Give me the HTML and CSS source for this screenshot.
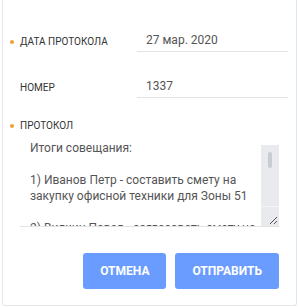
FILE: index.html
```html
<!DOCTYPE html>
<html lang="ru">
<head>
<meta charset="utf-8">
<link rel="stylesheet" href="styles.css">
</head>
<body>
<div class="card">
  <div class="rows">
    <div class="label req">Дата протокола</div>
    <div class="field">27 мар. 2020</div>
    <div class="label">Номер</div>
    <div class="field">1337</div>
  </div>
  <div class="label req proto-label">Протокол</div>
  <div class="textarea">
    <div class="ta-text">Итоги совещания:<br><br>1) Иванов Петр - составить смету на<br>закупку офисной техники для Зоны 51<br><br>2) Вилкин Павел - согласовать смету на<br>с отделом закупок</div>
    <div class="scrollbar">
      <div class="track"><div class="thumb"></div></div>
      <div class="corner">
        <svg width="9" height="9" viewBox="0 0 9 9"><path d="M1 8 L8 1 M5 8 L8 5" stroke="#555" stroke-width="1" fill="none"/></svg>
      </div>
    </div>
  </div>
  <div class="actions">
    <button class="btn">Отмена</button>
    <button class="btn">Отправить</button>
  </div>
</div>
</body>
</html>
```
FILE: styles.css
```css
html, body {
  margin: 0;
  padding: 0;
  background: #fff;
}
body {
  font-family: Roboto, "Liberation Sans", sans-serif;
}
.card {
  box-sizing: border-box;
  margin-left: 2px;
  width: 295px;
  height: 306px;
  border: 1px solid #e4e6ea;
  border-top: none;
  border-radius: 0 0 3px 3px;
  padding: 29px 8px 0 17px;
}
.rows {
  display: grid;
  grid-template-columns: 117px 1fr;
  row-gap: 23px;
  align-items: center;
}
.label {
  position: relative;
  font-size: 10px;
  line-height: 16px;
  text-transform: uppercase;
  color: #333;
}
.rows .label {
  padding-top: 2px;
}
.label.req::before {
  content: "";
  position: absolute;
  left: -10px;
  top: 50%;
  margin-top: -2px;
  width: 4px;
  height: 4px;
  border-radius: 50%;
  background: #f3a132;
}
.rows .label.req::before {
  margin-top: -1px;
}
.field {
  font-size: 12px;
  line-height: 16px;
  color: #555;
  padding: 3px 0 3px 9px;
  border-bottom: 1px solid #e3e3e3;
}
.proto-label {
  margin-top: 20px;
}
.textarea {
  box-sizing: border-box;
  margin-top: 4px;
  width: 259px;
  height: 89px;
  border-bottom: 1px solid #e3e3e3;
  display: flex;
  overflow: hidden;
}
.ta-text {
  flex: 1;
  padding: 2px 0 0 10px;
  font-size: 12px;
  line-height: 16px;
  color: #555;
  white-space: nowrap;
  overflow: hidden;
}
.scrollbar {
  width: 18px;
  margin-top: 7px;
  display: flex;
  flex-direction: column;
  background: #e8eaed;
}
.track {
  flex: 1;
  display: flex;
  justify-content: center;
}
.thumb {
  margin-top: 7px;
  width: 4px;
  height: 16px;
  border-radius: 2px;
  background: #c9ccd1;
}
.corner {
  height: 18px;
  border-top: 1px solid #f4f5f7;
  display: flex;
  justify-content: flex-end;
  align-items: flex-end;
  padding: 0 1px 1px 0;
}
.corner svg {
  display: block;
}
.actions {
  display: flex;
  justify-content: flex-end;
  gap: 9px;
  margin-top: 26px;
  margin-right: 9px;
}
.btn {
  height: 36px;
  padding: 0 17px;
  border: none;
  border-radius: 3px;
  background: #6a9cff;
  color: #fff;
  font-family: Roboto, "Liberation Sans", sans-serif;
  font-size: 12px;
  font-weight: 700;
  text-transform: uppercase;
  cursor: pointer;
}
```
